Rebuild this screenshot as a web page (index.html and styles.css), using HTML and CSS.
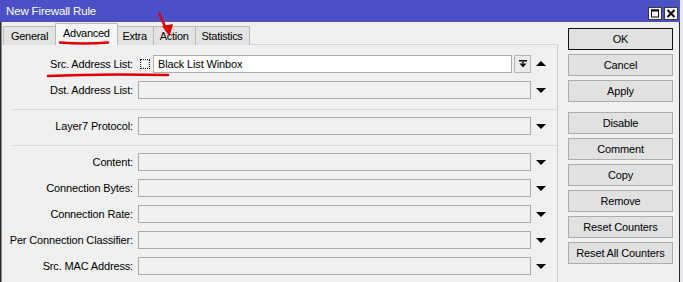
FILE: index.html
```html
<!DOCTYPE html>
<html lang="en">
  <head>
    <meta charset="UTF-8" />
    <title>New Firewall Rule</title>
    <link rel="stylesheet" href="styles.css">
  </head>
  <body>
    <div class="window">
      <div class="titlebar">
        <span class="title">New Firewall Rule</span>
        <span class="tb-btn">
          <svg width="14" height="13" viewBox="0 0 14 13">
            <rect x="0.5" y="0.5" width="13" height="12" fill="#f2f2f2" stroke="#3a3a3a" />
            <rect x="3.5" y="3" width="7" height="7" fill="none" stroke="#111" />
            <rect x="3" y="2.5" width="8" height="2" fill="#111" />
          </svg>
        </span>
        <span class="tb-btn">
          <svg width="14" height="13" viewBox="0 0 14 13">
            <rect x="0.5" y="0.5" width="13" height="12" fill="#f2f2f2" stroke="#3a3a3a" />
            <path d="M3.5 3 L10.5 10 M10.5 3 L3.5 10" stroke="#111" stroke-width="2" />
          </svg>
        </span>
      </div>
      <div class="frame">
        <div class="main">
          <div class="tabs">
            <span class="tab">General</span>
            <span class="tab active">Advanced</span>
            <span class="tab">Extra</span>
            <span class="tab">Action</span>
            <span class="tab">Statistics</span>
          </div>
          <div class="panel">
            <div class="row">
              <span class="lbl">Src. Address List:</span>
              <div class="field">
                <span class="check"></span>
                <span class="input value">Black List Winbox</span>
                <span class="drop">
                  <svg width="8" height="8" viewBox="0 0 8 8">
                    <rect x="0" y="0" width="8" height="1.5" fill="#111" />
                    <rect x="3.2" y="1.5" width="1.6" height="2" fill="#111" />
                    <path d="M0.5 3.5 L7.5 3.5 L4 7.5 Z" fill="#111" />
                  </svg>
                </span>
              </div>
              <span class="arrow up"></span>
            </div>
            <div class="row">
              <span class="lbl">Dst. Address List:</span>
              <div class="field"><span class="input"></span></div>
              <span class="arrow"></span>
            </div>
            <div class="sep"></div>
            <div class="row">
              <span class="lbl">Layer7 Protocol:</span>
              <div class="field"><span class="input"></span></div>
              <span class="arrow"></span>
            </div>
            <div class="sep"></div>
            <div class="row">
              <span class="lbl">Content:</span>
              <div class="field"><span class="input"></span></div>
              <span class="arrow"></span>
            </div>
            <div class="row">
              <span class="lbl">Connection Bytes:</span>
              <div class="field"><span class="input"></span></div>
              <span class="arrow"></span>
            </div>
            <div class="row">
              <span class="lbl">Connection Rate:</span>
              <div class="field"><span class="input"></span></div>
              <span class="arrow"></span>
            </div>
            <div class="row">
              <span class="lbl">Per Connection Classifier:</span>
              <div class="field"><span class="input"></span></div>
              <span class="arrow"></span>
            </div>
            <div class="row">
              <span class="lbl">Src. MAC Address:</span>
              <div class="field"><span class="input"></span></div>
              <span class="arrow"></span>
            </div>
          </div>
        </div>
        <div class="actions">
          <div class="btn default">OK</div>
          <div class="btn">Cancel</div>
          <div class="btn">Apply</div>
          <div class="btn gap">Disable</div>
          <div class="btn">Comment</div>
          <div class="btn">Copy</div>
          <div class="btn">Remove</div>
          <div class="btn">Reset Counters</div>
          <div class="btn">Reset All Counters</div>
        </div>
      </div>
      <!-- red marks drawn over the screenshot -->
      <svg class="marks" width="683" height="282" viewBox="0 0 683 282">
        <path d="M60 42.5 Q84 44.5 108 42.5" fill="none" stroke="#e10000" stroke-width="2.5" stroke-linecap="round" />
        <path d="M48 76 Q100 73.5 168 75" fill="none" stroke="#e10000" stroke-width="2.5" stroke-linecap="round" />
        <path d="M159.5 14 L166 29" fill="none" stroke="#e10000" stroke-width="2.5" stroke-linecap="round" />
        <path d="M162 26 L173 24 L169.5 36.5 Z" fill="#e10000" />
      </svg>
    </div>
  </body>
</html>
```

FILE: styles.css
```css
html,
body {
  margin: 0;
}
body {
  background: #e6e8ee;
  font-family: "Liberation Sans", Arial, sans-serif;
  font-size: 11px;
  letter-spacing: -0.15px;
  color: #000;
}
.window {
  position: relative;
  width: 680px;
  height: 282px;
  background: #f0f0f0;
  overflow: hidden;
}
.titlebar {
  height: 22px;
  background: #4c50c6;
  display: flex;
  align-items: flex-start;
  padding: 0 2px 0 6px;
  color: #fff;
  font-size: 11.5px;
}
.title {
  flex: 1;
  line-height: 22px;
}
.tb-btn {
  margin-top: 7px;
  margin-left: 2px;
  height: 13px;
}
.frame {
  display: flex;
  height: 260px;
  border-left: 1px solid #2a2a2a;
  border-right: 1px solid #2a2a2a;
  box-shadow: inset 1px 0 0 #8a8a8a;
}
.main {
  width: 555px;
  margin-left: 2px;
}
.tabs {
  display: flex;
  align-items: flex-end;
  height: 21px;
  margin-top: 2px;
  margin-bottom: -1px;
  position: relative;
  z-index: 1;
}
.tab {
  height: 19px;
  line-height: 18px;
  padding: 0 6px;
  border: 1px solid #bababa;
  border-bottom: none;
  background: #e3e3e3;
  box-sizing: border-box;
  margin-left: -1px;
  letter-spacing: -0.3px;
}
.tab:first-child {
  margin-left: 0;
  padding: 0 7px;
}
.tab.active {
  height: 22px;
  line-height: 19px;
  background: #f7f7f7;
  padding: 0 7px;
  margin: 0 -1px;
  position: relative;
}
.panel {
  display: flex;
  flex-direction: column;
  height: 240px;
  padding-top: 10px;
  border-top: 1px solid #d4d4d4;
  border-right: 1px solid #cdcdcd;
  box-sizing: border-box;
}
.panel > * {
  flex-shrink: 0;
}
.row {
  display: flex;
  align-items: center;
  height: 18px;
  margin-bottom: 8px;
}
.lbl {
  width: 130px;
  text-align: right;
  margin-right: 5px;
  white-space: nowrap;
}
.field {
  display: flex;
  align-items: center;
  width: 393px;
  height: 18px;
}
.input {
  flex: 1;
  height: 18px;
  border: 1px solid #ababab;
  box-sizing: border-box;
  background: #f0f0f0;
}
.value {
  background: #fff;
  padding-left: 4px;
  line-height: 16px;
}
.check {
  width: 10px;
  height: 10px;
  margin: 0 3px 0 2px;
  border: 1px dotted #222;
  box-sizing: border-box;
  background: #fff;
  box-shadow: inset 0 0 0 1px #e2e2e2;
}
.drop {
  width: 17px;
  height: 18px;
  margin-left: 2px;
  border: 1px solid #b5b5b5;
  box-sizing: border-box;
  background: #ececec;
  display: flex;
  align-items: center;
  justify-content: center;
}
.arrow {
  width: 0;
  height: 0;
  margin-left: 5px;
  border-left: 5px solid transparent;
  border-right: 5px solid transparent;
  border-top: 5px solid #000;
}
.arrow.up {
  border-top: none;
  border-bottom: 5px solid #000;
  margin-top: -2px;
}
.sep {
  height: 1px;
  background: #d8d8d8;
  margin: 2px 0 7px 9px;
}
.actions {
  width: 105px;
  margin-left: 10px;
  padding-top: 6px;
}
.btn {
  height: 22px;
  line-height: 20px;
  margin-bottom: 4px;
  border: 1px solid #adadad;
  background: #e1e1e1;
  text-align: center;
  box-sizing: border-box;
}
.btn.default {
  border-color: #111;
}
.btn.gap {
  margin-top: 10px;
}
.marks {
  position: absolute;
  left: 0;
  top: 0;
  z-index: 2;
  pointer-events: none;
}
```
